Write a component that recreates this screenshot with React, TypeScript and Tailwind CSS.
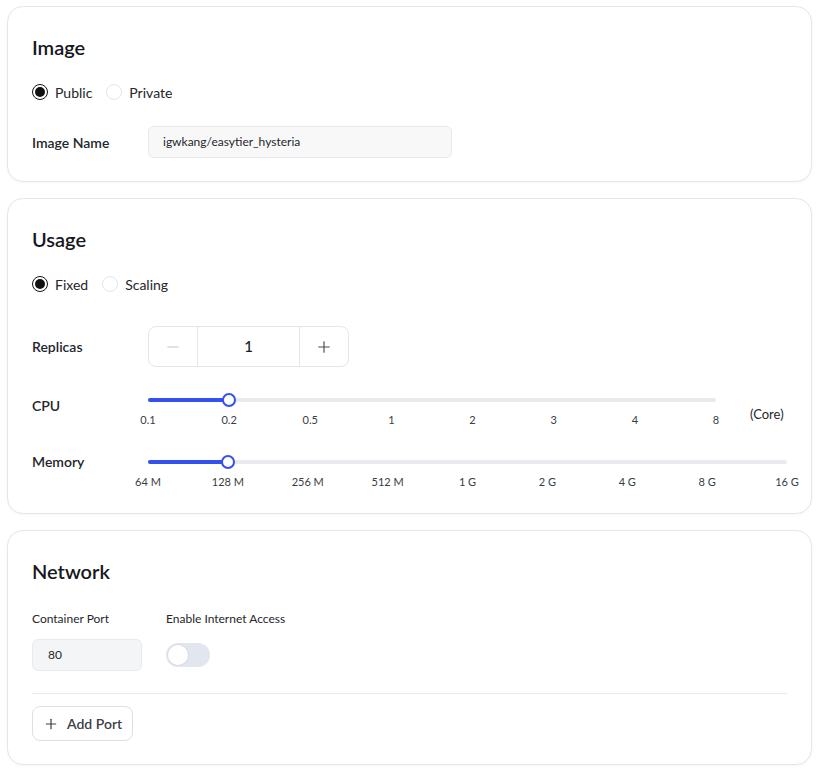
import React from "react";
import { Minus, Plus } from "lucide-react";

const CPU_MARKS = ["0.1", "0.2", "0.5", "1", "2", "3", "4", "8"];
const MEM_MARKS = ["64 M", "128 M", "256 M", "512 M", "1 G", "2 G", "4 G", "8 G", "16 G"];

const Card: React.FC<{ title: string; children: React.ReactNode }> = ({ title, children }) => (
  <section className="bg-white border border-[#e4e6ea] rounded-2xl shadow-[0_1px_3px_rgba(0,0,0,0.04)] px-6 pt-[26px] pb-[23px]">
    <h2 className="text-[20px] leading-7 font-semibold text-[#16181d]">{title}</h2>
    {children}
  </section>
);

const Radio: React.FC<{ label: string; checked?: boolean }> = ({ label, checked }) => (
  <label className="flex items-center gap-[7px] h-5">
    <span
      className={`w-4 h-4 rounded-full flex items-center justify-center ${
        checked ? "border-[1.5px] border-[#111]" : "border border-[#e3e5e9]"
      }`}
    >
      {checked && <span className="w-[10px] h-[10px] rounded-full bg-[#111]" />}
    </span>
    <span className="text-[14px] text-[#24262b]">{label}</span>
  </label>
);

const Slider: React.FC<{ marks: string[]; value: number; className?: string }> = ({ marks, value, className }) => {
  const pct = (value / (marks.length - 1)) * 100;
  return (
    <div className={className}>
      <div className="relative h-[14px] flex items-center">
        <div className="w-full h-1 rounded-full bg-[#e9eaf0]" />
        <div className="absolute left-0 h-1 rounded-full bg-[#3350f0]" style={{ width: `${pct}%` }} />
        <div
          className="absolute w-[14px] h-[14px] -ml-[7px] rounded-full bg-white border-2 border-[#3350f0]"
          style={{ left: `${pct}%` }}
        />
      </div>
      <div className="relative h-4 mt-[5px]">
        {marks.map((m, i) => (
          <span
            key={m}
            className="absolute top-0 -translate-x-1/2 text-[11px] leading-4 text-[#3a3d44] whitespace-nowrap"
            style={{ left: `${(i / (marks.length - 1)) * 100}%` }}
          >
            {m}
          </span>
        ))}
      </div>
    </div>
  );
};

export default function App() {
  return (
    <div className="min-h-screen bg-white font-['Lato','Noto_Sans',sans-serif] pt-[6px] pl-[7px] w-[812px] flex flex-col gap-4">
      <Card title="Image">
        <div className="flex items-center gap-[14px] mt-[21px]">
          <Radio label="Public" checked />
          <Radio label="Private" />
        </div>
        <div className="flex items-center mt-6">
          <span className="w-[116px] text-[14px] font-semibold text-[#24262b]">Image Name</span>
          <div className="w-[304px] h-8 flex items-center px-[14px] rounded-md bg-[#f8f8f9] border border-[#e6e8eb] text-[12px] text-[#24262b]">
            igwkang/easytier_hysteria
          </div>
        </div>
      </Card>

      <Card title="Usage">
        <div className="flex items-center gap-[14px] mt-[21px]">
          <Radio label="Fixed" checked />
          <Radio label="Scaling" />
        </div>
        <div className="flex items-center mt-8">
          <span className="w-[116px] text-[14px] font-semibold text-[#24262b]">Replicas</span>
          <div className="flex h-[41px] rounded-lg border border-[#e4e6ea] overflow-hidden">
            <button className="w-12 flex items-center justify-center text-[#c3c6cc]">
              <Minus size={18} strokeWidth={1.6} />
            </button>
            <div className="w-[103px] border-x border-[#e4e6ea] flex items-center justify-center text-[15px] font-medium text-[#1b1d22]">
              1
            </div>
            <button className="w-12 flex items-center justify-center text-[#4b4f57]">
              <Plus size={18} strokeWidth={1.6} />
            </button>
          </div>
        </div>
        <div className="flex items-start mt-[26px]">
          <span className="w-[116px] text-[14px] font-semibold text-[#24262b] leading-5 mt-[3px]">CPU</span>
          <Slider marks={CPU_MARKS} value={1} className="w-[568px]" />
          <span className="ml-[34px] mt-[11px] text-[13px] leading-5 text-[#24262b]">(Core)</span>
        </div>
        <div className="flex items-start mt-[27px]">
          <span className="w-[116px] text-[14px] font-semibold text-[#24262b] leading-5 -mt-[3px]">Memory</span>
          <Slider marks={MEM_MARKS} value={1} className="flex-1" />
        </div>
      </Card>

      <Card title="Network">
        <div className="flex gap-6 mt-[26px]">
          <div className="flex flex-col">
            <span className="text-[12px] leading-4 text-[#24262b]">Container Port</span>
            <div className="mt-3 w-[110px] h-8 flex items-center px-[15px] rounded-md bg-[#f4f5f7] border border-[#e8eaed] text-[12px] text-[#24262b]">
              80
            </div>
          </div>
          <div className="flex flex-col">
            <span className="text-[12px] leading-4 text-[#24262b]">Enable Internet Access</span>
            <div className="mt-3 h-8 flex items-center">
              <div className="w-11 h-6 rounded-full bg-[#e2e6ef] flex items-center px-[2px]">
                <span className="w-5 h-5 rounded-full bg-white shadow-[0_0_0_1px_rgba(0,0,0,0.04)]" />
              </div>
            </div>
          </div>
        </div>
        <div className="mt-[22px] border-t border-[#e8eaed]" />
        <button className="mt-3 h-[35px] px-[10px] flex items-center gap-2 rounded-lg border border-[#dcdfe4] text-[14px] font-semibold text-[#3d4048]">
          <Plus size={16} strokeWidth={1.8} />
          Add Port
        </button>
      </Card>
    </div>
  );
}
